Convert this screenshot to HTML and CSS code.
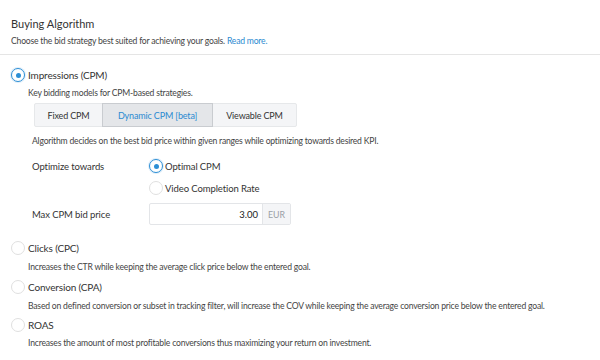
FILE: index.html
```html
<!DOCTYPE html>
<html>
<head>
<meta charset="utf-8">
<link rel="stylesheet" href="styles.css">
</head>
<body>
<div class="header">
  <div class="title">Buying Algorithm</div>
  <div class="subtitle">Choose the bid strategy best suited for achieving your goals. <a class="link">Read more.</a></div>
</div>
<div class="content">
  <div class="option o1">
    <div class="opt-row"><span class="radio checked"></span><span class="opt-label">Impressions (CPM)</span></div>
    <div class="desc">Key bidding models for CPM-based strategies.</div>
    <div class="sub">
      <div class="tabs">
        <div class="tab t1">Fixed CPM</div>
        <div class="tab t2 active">Dynamic CPM [beta]</div>
        <div class="tab t3">Viewable CPM</div>
      </div>
      <div class="algo">Algorithm decides on the best bid price within given ranges while optimizing towards desired KPI.</div>
      <div class="form">
        <div class="flabel">Optimize towards</div>
        <div class="fcontrol">
          <div class="subradio"><span class="radio checked"></span><span>Optimal CPM</span></div>
          <div class="subradio"><span class="radio"></span><span>Video Completion Rate</span></div>
        </div>
        <div class="flabel flabel-input">Max CPM bid price</div>
        <div class="fcontrol">
          <div class="input"><span class="val">3.00</span><span class="addon">EUR</span></div>
        </div>
      </div>
    </div>
  </div>
  <div class="option o2">
    <div class="opt-row"><span class="radio"></span><span class="opt-label">Clicks (CPC)</span></div>
    <div class="desc">Increases the CTR while keeping the average click price below the entered goal.</div>
  </div>
  <div class="option o3">
    <div class="opt-row"><span class="radio"></span><span class="opt-label">Conversion (CPA)</span></div>
    <div class="desc">Based on defined conversion or subset in tracking filter, will increase the COV while keeping the average conversion price below the entered goal.</div>
  </div>
  <div class="option o4">
    <div class="opt-row"><span class="radio"></span><span class="opt-label">ROAS</span></div>
    <div class="desc">Increases the amount of most profitable conversions thus maximizing your return on investment.</div>
  </div>
</div>
</body>
</html>
```
FILE: styles.css
```css
html, body {
  margin: 0;
  padding: 0;
  background: #fff;
}
body {
  font-family: Lato, "Liberation Sans", sans-serif;
  color: #333;
  width: 600px;
  height: 360px;
  overflow: hidden;
}
.header {
  padding: 16px 11px 7px;
  border-bottom: 1px solid #e5e5e5;
}
.title {
  font-size: 11px;
  line-height: 16px;
  color: #333;
}
.subtitle {
  font-size: 8.6px;
  letter-spacing: -0.2px;
  line-height: 12px;
  margin-top: 3px;
  color: #444;
}
.link {
  color: #2a8ad1;
}
.content {
  padding: 12px 11px 0;
}
.opt-row {
  display: flex;
  align-items: center;
  height: 16px;
}
.radio {
  box-sizing: border-box;
  width: 14px;
  height: 14px;
  border-radius: 50%;
  border: 1px solid #e0e0e0;
  background: #fff;
  display: inline-block;
  position: relative;
  flex: none;
}
.radio.checked {
  border: 1px solid #2d8fd5;
  box-shadow: 0 0 0 1px rgba(45, 143, 213, 0.15);
}
.radio.checked::after {
  content: "";
  position: absolute;
  left: 3.5px;
  top: 3.5px;
  width: 5px;
  height: 5px;
  border-radius: 50%;
  background: #2d8fd5;
}
.opt-label {
  margin-left: 3px;
  font-size: 10px;
  letter-spacing: -0.15px;
  color: #333;
}
.desc {
  font-size: 8.6px;
  letter-spacing: -0.2px;
  line-height: 12px;
  color: #444;
  margin-left: 17px;
  margin-top: 5px;
}
.o1 .desc {
  margin-top: 4px;
}
.sub {
  padding-left: 23px;
}
.tabs {
  display: flex;
  margin-top: 4px;
  width: 263px;
  height: 24px;
  box-sizing: border-box;
  border: 1px solid #e6e8ea;
  background: #f4f5f7;
  border-radius: 2px;
}
.tab {
  display: flex;
  align-items: center;
  justify-content: center;
  font-size: 9px;
  letter-spacing: -0.15px;
  color: #333;
  box-sizing: border-box;
}
.t1 { width: 67px; }
.t2 { width: 111px; }
.t3 { flex: 1; }
.tab.active {
  background: #e4e6e9;
  border: 1px solid #c9ccd0;
  color: #2a8ad1;
  margin: -1px 0;
  height: 24px;
}
.algo {
  font-size: 8.6px;
  letter-spacing: -0.2px;
  line-height: 12px;
  color: #444;
  margin-top: 8px;
  margin-left: -2px;
}
.form {
  display: grid;
  grid-template-columns: 117px 1fr;
  row-gap: 7px;
  margin-left: -2px;
  margin-top: 11px;
}
.flabel {
  font-size: 9.5px;
  letter-spacing: -0.1px;
  color: #333;
  height: 16px;
  display: flex;
  align-items: center;
  align-self: start;
}
.flabel-input {
  height: 22px;
}
.subradio {
  display: flex;
  align-items: center;
  height: 16px;
  font-size: 9.5px;
  letter-spacing: -0.1px;
  color: #333;
  margin-bottom: 6px;
}
.subradio .radio {
  margin-right: 2px;
}
.fcontrol .subradio:last-child {
  margin-bottom: 0;
}
.input {
  display: flex;
  width: 142px;
  height: 22px;
  box-sizing: border-box;
  border: 1px solid #e3e5e8;
  border-radius: 2px;
  font-size: 9.5px;
}
.val {
  flex: 1;
  padding-right: 4px;
  display: flex;
  align-items: center;
  justify-content: flex-end;
  color: #222;
}
.addon {
  width: 27px;
  background: #f4f5f7;
  border-left: 1px solid #e3e5e8;
  color: #9aa0a6;
  display: flex;
  align-items: center;
  justify-content: center;
  font-size: 8.8px;
}
.o2 {
  margin-top: 15px;
}
.o3 {
  margin-top: 6px;
}
.o4 {
  margin-top: 5px;
}
.o4 .desc {
  margin-top: 4px;
}
```
